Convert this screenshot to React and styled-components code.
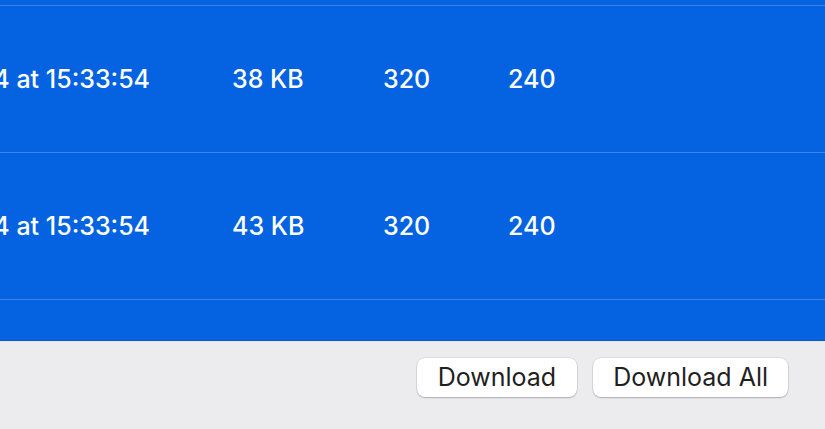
import styled, { createGlobalStyle } from 'styled-components';

const GlobalStyle = createGlobalStyle`
  html, body {
    margin: 0;
    padding: 0;
    background: #ececee;
  }
  body {
    font-family: Inter, 'Liberation Sans', Arial, sans-serif;
  }
`;

const Window = styled.div`
  display: flex;
  flex-direction: column;
  width: 825px;
  height: 429px;
  overflow: hidden;
`;

const Table = styled.div`
  flex: 1;
  display: flex;
  flex-direction: column;
  background-color: #0563e1;
  border-bottom: 1px solid #2455a8;
  overflow: hidden;
`;

const Row = styled.div`
  display: grid;
  grid-template-columns: 150px 82px 151px 125px 1fr;
  align-items: center;
  flex: none;
  height: ${({ $height }) => $height}px;
  border-bottom: 1px solid #3b82ea;
  color: #ffffff;
  font-size: 25px;
  font-weight: 500;
`;

const DateCell = styled.div`
  display: flex;
  justify-content: flex-end;
  overflow: hidden;
  white-space: nowrap;
`;

const Cell = styled.div`
  white-space: nowrap;
  grid-column: ${({ $col }) => $col};
`;

const Footer = styled.div`
  display: flex;
  justify-content: flex-end;
  align-items: flex-start;
  gap: 16px;
  height: 88px;
  padding: 16px 37px 0 0;
  box-sizing: border-box;
  background-color: #ececee;
  border-top: 1px solid #d9e6f2;
`;

const Button = styled.button`
  height: 39px;
  padding: 0 ${({ $pad }) => $pad}px;
  border: none;
  border-radius: 8px;
  background: #ffffff;
  box-shadow: 0 0 0 0.5px rgba(0, 0, 0, 0.12), 0 1px 1.5px rgba(0, 0, 0, 0.22);
  color: #1f1f1f;
  font-family: Inter, 'Liberation Sans', Arial, sans-serif;
  font-size: 25px;
  line-height: 39px;
`;

const rows = [
  { date: '2024 at 15:33:54', size: '38 KB', w: '320', h: '240' },
  { date: '2024 at 15:33:54', size: '43 KB', w: '320', h: '240' },
];

const App = () => {
  return (
    <Window>
      <GlobalStyle />
      <Table>
        <Row $height={5} />
        {rows.map((r, i) => (
          <Row key={i} $height={146}>
            <DateCell>{r.date}</DateCell>
            <Cell $col={3}>{r.size}</Cell>
            <Cell $col={4}>{r.w}</Cell>
            <Cell $col={5}>{r.h}</Cell>
          </Row>
        ))}
      </Table>
      <Footer>
        <Button $pad={21}>Download</Button>
        <Button $pad={20}>Download All</Button>
      </Footer>
    </Window>
  );
};

export default App;
